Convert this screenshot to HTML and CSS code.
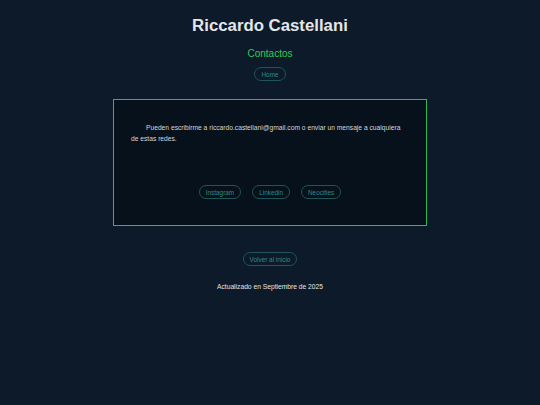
FILE: index.html
```html
<!DOCTYPE html>
<html lang="es">
<head>
<meta charset="utf-8">
<title>Riccardo Castellani - Contactos</title>
<link rel="stylesheet" href="styles.css">
</head>
<body>
<header class="head">
  <h1 class="title">Riccardo Castellani</h1>
  <h2 class="subtitle">Contactos</h2>
  <nav class="nav"><a class="pill" href="#">Home</a></nav>
</header>
<main class="card">
  <p class="text">Pueden escribirme a riccardo.castellani@gmail.com o enviar un mensaje a cualquiera de estas redes.</p>
  <div class="links">
    <a class="pill" href="#">Instagram</a>
    <a class="pill" href="#">Linkedin</a>
    <a class="pill" href="#">Neocities</a>
  </div>
</main>
<div class="back"><a class="pill" href="#">Volver al inicio</a></div>
<footer class="foot">Actualizado en Septiembre de 2025</footer>
</body>
</html>
```
FILE: styles.css
```css
html, body {
  margin: 0;
  padding: 0;
}
body {
  background: #0d1a2a;
  font-family: "Liberation Sans", Arial, sans-serif;
  color: #d4d8dc;
  padding-top: 16px;
  height: 405px;
  box-sizing: border-box;
}
.head {
  display: flex;
  flex-direction: column;
  align-items: center;
}
.title {
  margin: 0;
  font-size: 16.8px;
  line-height: 20px;
  font-weight: bold;
  color: #e4e6ea;
}
.subtitle {
  margin: 12px 0 0;
  font-size: 10px;
  line-height: 12px;
  font-weight: normal;
  color: #2ecc55;
}
.nav {
  margin-top: 7px;
  display: flex;
}
.pill {
  display: inline-flex;
  align-items: center;
  height: 14px;
  box-sizing: border-box;
  padding: 0 6px;
  border: 1px solid #1e5558;
  border-radius: 8px;
  color: #2c8a8a;
  font-size: 6.4px;
  text-decoration: none;
}
.card {
  width: 314px;
  box-sizing: border-box;
  margin: 18px auto 0;
  border: 1px solid #2fb852;
  background: #07111b;
  padding: 22px 17px 26px;
}
.text {
  margin: 0;
  font-size: 6.7px;
  line-height: 11px;
  text-indent: 15px;
  color: #d2d6da;
}
.links {
  margin-top: 41px;
  display: flex;
  justify-content: center;
  gap: 11px;
}
.back {
  margin-top: 26px;
  display: flex;
  justify-content: center;
}
.foot {
  margin-top: 16px;
  text-align: center;
  font-size: 6.7px;
  line-height: 10px;
  color: #e2e4e8;
}
```
